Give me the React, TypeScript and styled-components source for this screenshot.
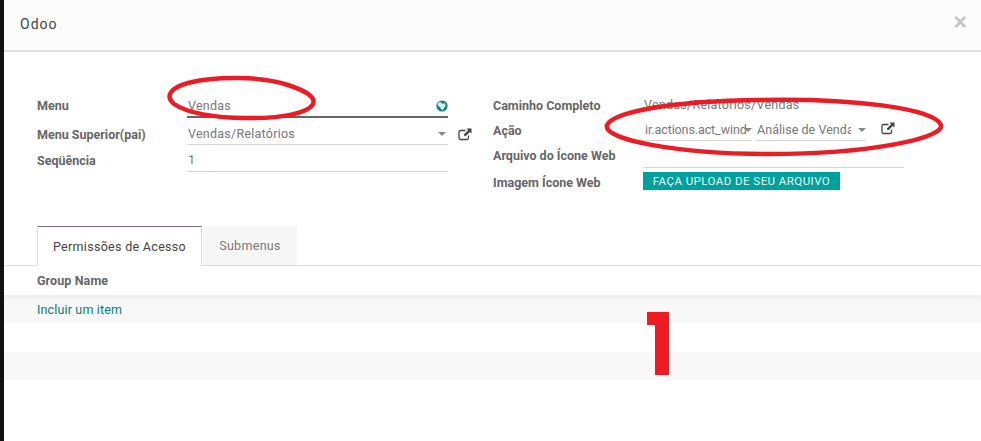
import React from "react";
import styled, { createGlobalStyle } from "styled-components";

const Global = createGlobalStyle`
  html, body { margin: 0; padding: 0; background: #fff; }
  body { font-family: Roboto, "Liberation Sans", sans-serif; font-size: 12.5px; color: #666; }
`;

const Modal = styled.div`
  position: relative;
  width: 981px;
  height: 441px;
  box-sizing: border-box;
  border-left: 4px solid #111;
  background: #fff;
  overflow: hidden;
`;

const Header = styled.header`
  height: 52px;
  box-sizing: border-box;
  border-bottom: 2px solid #dedede;
  background: #fcfcfc;
  display: flex;
  align-items: center;
  justify-content: space-between;
  padding: 0 14px 3px 16px;
`;

const Title = styled.h1`
  margin: 0;
  font-size: 14px;
  font-weight: 400;
  letter-spacing: 1px;
  color: #444;
`;

const Close = styled.span`
  font-size: 23px;
  line-height: 20px;
  font-weight: 700;
  color: #c4c4c4;
  font-family: "Liberation Sans", sans-serif;
  margin-top: -4px;
`;

const FormGrid = styled.div`
  display: grid;
  grid-template-columns: 456px 1fr;
  padding: 40px 0 0 33px;
  height: 174px;
  box-sizing: border-box;
`;

const Column = styled.div`
  display: flex;
  flex-direction: column;
`;

const Row = styled.div<{ $h: number }>`
  display: flex;
  align-items: flex-start;
  height: ${(p) => p.$h}px;
`;

const Label = styled.label<{ $w: number }>`
  width: ${(p) => p.$w}px;
  flex: none;
  font-weight: 700;
  font-size: 12.5px;
  line-height: 27px;
  color: #666;
`;

const Field = styled.div<{ $w: number; $gap?: number; $strong?: boolean; $bare?: boolean; $inset?: number; $extra?: number }>`
  width: ${(p) => p.$w}px;
  height: ${(p) => (p.$strong ? 21 : 20)}px;
  flex: none;
  box-sizing: content-box;
  display: flex;
  align-items: center;
  overflow: hidden;
  white-space: nowrap;
  margin-left: ${(p) => p.$gap ?? 0}px;
  padding: 3px 0 ${(p) => p.$extra ?? 0}px ${(p) => p.$inset ?? 1}px;
  line-height: 20px;
  letter-spacing: 0.25px;
  color: #777;
  border-bottom: ${(p) => (p.$bare ? "none" : p.$strong ? "2px solid #666" : "1px solid #d4d4d4")};
`;

const FieldText = styled.span<{ $spacing?: number }>`
  overflow: hidden;
  flex: 1;
  min-width: 0;
  letter-spacing: ${(p) => p.$spacing ?? 0.25}px;
`;

const Caret = styled.span<{ $pull?: number; $push?: number }>`
  flex: none;
  width: 0;
  height: 0;
  position: relative;
  margin-left: ${(p) => p.$pull ?? 0}px;
  margin-right: ${(p) => p.$push ?? 2}px;
  border-left: 4px solid transparent;
  border-right: 4px solid transparent;
  border-top: 4px solid #888;
`;

const IconSlot = styled.span<{ $gap: number; $top: number }>`
  flex: none;
  display: inline-flex;
  margin: ${(p) => p.$top}px 0 0 ${(p) => p.$gap}px;
  color: #444;
`;

const UploadButton = styled.button`
  height: 18px;
  width: 197px;
  margin-top: 3px;
  padding: 0;
  border: 0;
  background: #00a09d;
  color: #e8f7f6;
  font: 400 11.5px Roboto, sans-serif;
  letter-spacing: 0.45px;
`;

const TabBar = styled.div`
  display: flex;
  height: 40px;
  box-sizing: border-box;
  padding-left: 33px;
  border-bottom: 1px solid #dcdcdc;
`;

const Tab = styled.div<{ $active?: boolean }>`
  height: ${(p) => (p.$active ? 40 : 39)}px;
  box-sizing: border-box;
  display: flex;
  align-items: center;
  justify-content: center;
  letter-spacing: 0.3px;
  margin-right: 1px;
  width: ${(p) => (p.$active ? 165 : 94)}px;
  color: ${(p) => (p.$active ? "#444" : "#777")};
  background: ${(p) => (p.$active ? "#fff" : "#f7f7f7")};
  border: ${(p) => (p.$active ? "1px solid #dcdcdc" : "none")};
  border-top: ${(p) => (p.$active ? "1px solid #7c6b78" : "none")};
  border-bottom: none;
`;

const TableHead = styled.div`
  height: 29px;
  padding-left: 33px;
  font-weight: 700;
  letter-spacing: 0.1px;
  line-height: 29px;
  color: #666;
  box-shadow: 0 3px 5px rgba(0, 0, 0, 0.05);
  position: relative;
`;

const TableRow = styled.div<{ $odd?: boolean }>`
  height: ${(p) => (p.$odd ? 28 : 29)}px;
  padding-left: 33px;
  line-height: 29px;
  background: ${(p) => (p.$odd ? "#f8f8f8" : "#fff")};
`;

const AddLink = styled.a`
  color: #0a7c7c;
  letter-spacing: 0.15px;
`;

const Ink = styled.svg`
  position: absolute;
  left: -4px;
  top: 0;
  width: 981px;
  height: 441px;
  pointer-events: none;
`;

const BigOne = styled.span`
  position: absolute;
  left: 629px;
  top: 300px;
  font: 700 90px/88px Roboto, sans-serif;
  color: #ed1c24;
  white-space: nowrap;
  clip-path: polygon(14px 12px, 36px 12px, 36px 75px, 22px 75px, 22px 25px, 14px 25px);
  &::before {
    content: "";
    position: absolute;
    left: 14px;
    top: 12px;
    width: 22px;
    height: 13px;
    background: #ed1c24;
  }
  &::after {
    content: "";
    position: absolute;
    left: 22px;
    top: 25px;
    width: 14px;
    height: 50px;
    background: #ed1c24;
  }
`;

const ExternalIcon = () => (
  <svg width="14" height="13" viewBox="0 0 14 13" fill="none">
    <path d="M7.5 2.5H2.5a1.5 1.5 0 0 0-1.5 1.5v6a1.5 1.5 0 0 0 1.5 1.5h6.5a1.5 1.5 0 0 0 1.5-1.5V7.5" stroke="#444" strokeWidth="1.3" />
    <path d="M8.5 0.5H13.5V5.5L11.8 3.9 7.2 8.4 5.6 6.8 10.1 2.2Z" fill="#444" />
  </svg>
);

const GlobeIcon = () => (
  <svg width="12" height="12" viewBox="0 0 12 12">
    <circle cx="6" cy="6" r="5.6" fill="#0f7f7f" />
    <path d="M2 2.5 5 2.2 6.5 4 8.6 3 9.8 5.4 6.4 10.5 3.8 7.2 1.6 5Z" fill="#d8ecec" />
  </svg>
);

export default function App() {
  return (
    <>
      <Global />
      <Modal>
        <Header>
          <Title>Odoo</Title>
          <Close>×</Close>
        </Header>
        <FormGrid>
          <Column>
            <Row $h={29}>
              <Label $w={150}>Menu</Label>
              <Field $w={260} $strong>
                <FieldText>Vendas</FieldText>
                <GlobeIcon />
              </Field>
            </Row>
            <Row $h={26}>
              <Label $w={150}>Menu Superior(pai)</Label>
              <Field $w={260}>
                <FieldText>Vendas/Relatórios</FieldText>
                <Caret />
              </Field>
              <IconSlot $gap={10} $top={7}><ExternalIcon /></IconSlot>
            </Row>
            <Row $h={27}>
              <Label $w={150}>Seqüência</Label>
              <Field $w={260} $extra={1}>
                <FieldText>1</FieldText>
              </Field>
            </Row>
          </Column>
          <Column>
            <Row $h={25}>
              <Label $w={150}>Caminho Completo</Label>
              <Field $w={260} $bare>
                <FieldText>Vendas/Relatórios/Vendas</FieldText>
              </Field>
            </Row>
            <Row $h={25}>
              <Label $w={148}>Ação</Label>
              <Field $w={107} $inset={4}>
                <FieldText $spacing={-0.1}>ir.actions.act_wind</FieldText>
                <Caret $pull={-8} $push={0} />
              </Field>
              <Field $w={109} $gap={3} $inset={2}>
                <FieldText $spacing={0.05}>Análise de Venda</FieldText>
                <Caret $pull={7} $push={0} />
              </Field>
              <IconSlot $gap={15} $top={5}><ExternalIcon /></IconSlot>
            </Row>
            <Row $h={27}>
              <Label $w={150}>Arquivo do Ícone Web</Label>
              <Field $w={260} $extra={2} />
            </Row>
            <Row $h={24}>
              <Label $w={150}>Imagem Ícone Web</Label>
              <UploadButton>FAÇA UPLOAD DE SEU ARQUIVO</UploadButton>
            </Row>
          </Column>
        </FormGrid>
        <TabBar>
          <Tab $active>Permissões de Acesso</Tab>
          <Tab>Submenus</Tab>
        </TabBar>
        <TableHead>Group Name</TableHead>
        <TableRow $odd><AddLink>Incluir um item</AddLink></TableRow>
        <TableRow />
        <TableRow $odd />
        <Ink viewBox="0 0 981 441">
          <path d="M188 83C215 76 262 76 288 85C306 91 316 97 313 104C309 112 285 119 245 118C215 118 187 113 174 104C165 96 170 88 188 83Z" fill="none" stroke="#ed1c24" strokeWidth="4.5" />
          <path d="M607 125C614 112 670 101 760 100C850 98 935 108 941 125C945 138 870 154 770 154C680 154 602 140 607 125Z" fill="none" stroke="#ed1c24" strokeWidth="4.5" />
        </Ink>
        <BigOne>1</BigOne>
      </Modal>
    </>
  );
}
